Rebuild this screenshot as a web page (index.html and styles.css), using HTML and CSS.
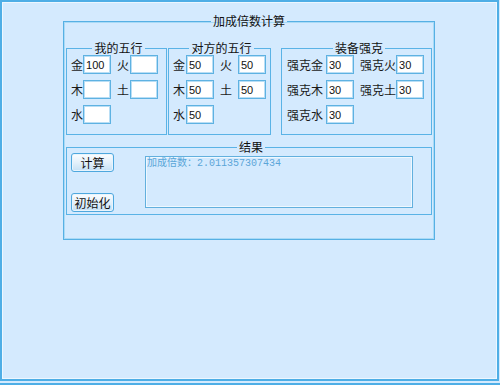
FILE: index.html
```html
<!DOCTYPE html>
<html lang="zh">
<head>
<meta charset="utf-8">
<title>加成倍数计算</title>
<link rel="stylesheet" href="styles.css">
</head>
<body>
<div class="frame">
  <fieldset class="main">
    <legend>加成倍数计算</legend>
    <div class="groups">
      <fieldset class="grp mine">
        <legend>我的五行</legend>
        <div class="wx">
          <label class="cell"><span>金</span><input class="num" value="100"></label>
          <label class="cell"><span>火</span><input class="num" value=""></label>
          <label class="cell"><span>木</span><input class="num" value=""></label>
          <label class="cell"><span>土</span><input class="num" value=""></label>
          <label class="cell"><span>水</span><input class="num" value=""></label>
        </div>
      </fieldset>
      <fieldset class="grp other">
        <legend>对方的五行</legend>
        <div class="wx wx-wide">
          <label class="cell"><span>金</span><input class="num" value="50"></label>
          <label class="cell"><span>火</span><input class="num" value="50"></label>
          <label class="cell"><span>木</span><input class="num" value="50"></label>
          <label class="cell"><span>土</span><input class="num" value="50"></label>
          <label class="cell"><span>水</span><input class="num" value="50"></label>
        </div>
      </fieldset>
      <fieldset class="grp equip">
        <legend>装备强克</legend>
        <div class="qk">
          <label class="cell c1"><span>强克金</span><input class="num" value="30"></label>
          <label class="cell c2"><span>强克火</span><input class="num" value="30"></label>
          <label class="cell c1"><span>强克木</span><input class="num" value="30"></label>
          <label class="cell c2"><span>强克土</span><input class="num" value="30"></label>
          <label class="cell c1"><span>强克水</span><input class="num" value="30"></label>
        </div>
      </fieldset>
    </div>
    <fieldset class="grp result">
      <legend>结果</legend>
      <div class="res">
        <div class="btns">
          <button class="btn">计算</button>
          <button class="btn">初始化</button>
        </div>
        <textarea class="out">加成倍数：2.011357307434</textarea>
      </div>
    </fieldset>
  </fieldset>
</div>
<div class="below"></div>
</body>
</html>
```

FILE: styles.css
```css
html, body {
  margin: 0;
  padding: 0;
  background: #d4eafe;
  font-family: "Noto Sans CJK SC", "DejaVu Sans", sans-serif;
  font-size: 12px;
  color: #1a1a1a;
  overflow: hidden;
}

.frame {
  box-sizing: border-box;
  width: 499px;
  height: 381px;
  border: 2px solid #4eaee6;
  box-shadow: inset 0 0 0 1px #ecf7ff;
  padding: 12px 0 0 61px;
}

.below {
  margin-top: 2px;
  border-top: 2px solid #4eaee6;
  height: 2px;
}

fieldset {
  margin: 0;
  min-width: 0;
  box-sizing: border-box;
}

legend {
  margin: 0 auto;
  padding: 0 2px;
  line-height: 14px;
  font-size: 12px;
  color: #111;
}

.main {
  width: 372px;
  border: 1px solid #56b0e4;
  box-shadow: inset 0 0 0 1px #a9daf6;
  padding: 13px 2px 24px 2px;
}

.groups {
  display: flex;
}

.grp {
  border: 1px solid #5ab3e6;
  padding: 0 0 10px 4px;
}

.mine { width: 101px; }
.other { width: 103px; margin-left: 1px; }
.equip { width: 151px; margin-left: 10px; padding-left: 5px; }

.wx {
  display: grid;
  grid-template-columns: 40px 41px;
  column-gap: 6px;
  row-gap: 6px;
}

.wx-wide {
  grid-template-columns: 41px 46px;
}

.qk {
  display: grid;
  grid-template-columns: 67px 63px;
  column-gap: 6px;
  row-gap: 6px;
}

.cell {
  display: flex;
  align-items: center;
  justify-content: space-between;
  height: 19px;
  white-space: nowrap;
}

.num {
  box-sizing: border-box;
  width: 28px;
  height: 19px;
  margin: 0;
  padding: 1px 0 0 2px;
  border: 1px solid #5eb2e2;
  box-shadow: inset 0 0 0 1px #b9def5;
  background: #fff;
  font-family: "Liberation Sans", "DejaVu Sans", sans-serif;
  font-size: 11px;
  color: #111;
  outline: none;
}

.result {
  width: 366px;
  margin-top: 5px;
  padding: 0 0 2px 4px;
}

.res {
  display: flex;
}

.btns {
  display: flex;
  flex-direction: column;
  justify-content: space-between;
  height: 59px;
  margin-top: -1px;
}

.btn {
  box-sizing: border-box;
  width: 43px;
  height: 19px;
  margin: 0;
  padding: 0;
  border: 1px solid #4ea8de;
  border-radius: 3px;
  background: linear-gradient(#fbfdff, #e4f1fb 50%, #c6e0f4);
  box-shadow: inset 0 0 0 1px #e8f4fd;
  font-family: "Noto Sans CJK SC", "DejaVu Sans", sans-serif;
  font-size: 12px;
  line-height: 16px;
  color: #111;
}

.out {
  box-sizing: border-box;
  width: 268px;
  height: 52px;
  margin: 2px 0 0 31px;
  padding: 1px 1px;
  border: 1px solid #62b0de;
  box-shadow: inset 0 0 0 1px #eef8ff;
  background: #d4eafe;
  font-family: "Liberation Mono", "Noto Sans CJK SC", monospace;
  font-size: 10px;
  line-height: 12px;
  color: #5ba6d8;
  resize: none;
  outline: none;
}
```
